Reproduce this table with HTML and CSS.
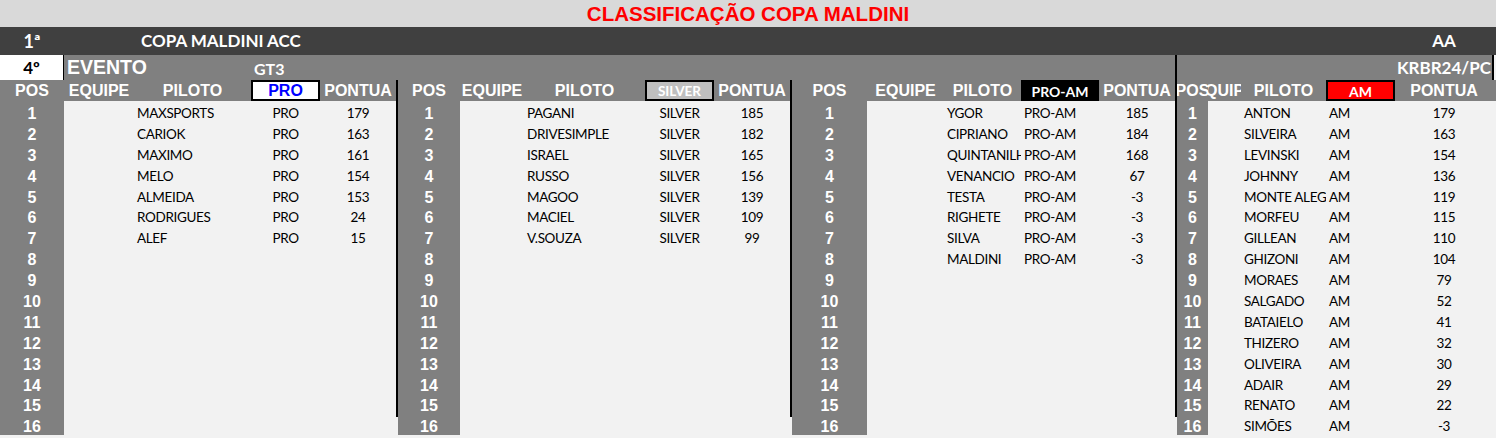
FILE: index.html
```html
<!DOCTYPE html>
<html lang="pt-BR">
<head>
<meta charset="utf-8">
<title>Classificação Copa Maldini</title>
<link rel="stylesheet" href="styles.css">
</head>
<body>
<div class="sheet">
  <div class="title">CLASSIFICAÇÃO COPA MALDINI</div>

  <div class="bar">
    <span class="bar-pos">1ª</span>
    <span></span>
    <span class="bar-name">COPA MALDINI ACC</span>
    <span class="bar-aa">AA</span>
    <span></span>
  </div>

  <div class="ev">
    <span class="ev-num">4º</span>
    <span class="ev-label">EVENTO</span>
    <span class="ev-class">GT3</span>
    <span class="ev-right">KRBR24/PC</span>
    <span class="ev-rest"></span>
  </div>

  <div class="panels">
    <section class="panel p1">
      <div class="hdr"><span>POS</span><span>EQUIPE</span><span>PILOTO</span><span class="box box-pro">PRO</span><span>PONTUA</span><span></span></div>
      <div class="body">
        <ol class="poscol"><li>1</li><li>2</li><li>3</li><li>4</li><li>5</li><li>6</li><li>7</li><li>8</li><li>9</li><li>10</li><li>11</li><li>12</li><li>13</li><li>14</li><li>15</li><li>16</li></ol>
        <div class="list">
          <div class="row"><span></span><span class="nm">MAXSPORTS</span><span class="cat">PRO</span><span class="pt">179</span></div>
          <div class="row"><span></span><span class="nm">CARIOK</span><span class="cat">PRO</span><span class="pt">163</span></div>
          <div class="row"><span></span><span class="nm">MAXIMO</span><span class="cat">PRO</span><span class="pt">161</span></div>
          <div class="row"><span></span><span class="nm">MELO</span><span class="cat">PRO</span><span class="pt">154</span></div>
          <div class="row"><span></span><span class="nm">ALMEIDA</span><span class="cat">PRO</span><span class="pt">153</span></div>
          <div class="row"><span></span><span class="nm">RODRIGUES</span><span class="cat">PRO</span><span class="pt">24</span></div>
          <div class="row"><span></span><span class="nm">ALEF</span><span class="cat">PRO</span><span class="pt">15</span></div>
        </div>
      </div>
    </section>

    <section class="panel p2">
      <div class="hdr"><span>POS</span><span>EQUIPE</span><span>PILOTO</span><span class="box box-silver">SILVER</span><span>PONTUA</span><span></span></div>
      <div class="body">
        <ol class="poscol"><li>1</li><li>2</li><li>3</li><li>4</li><li>5</li><li>6</li><li>7</li><li>8</li><li>9</li><li>10</li><li>11</li><li>12</li><li>13</li><li>14</li><li>15</li><li>16</li></ol>
        <div class="list">
          <div class="row"><span></span><span class="nm">PAGANI</span><span class="cat">SILVER</span><span class="pt">185</span></div>
          <div class="row"><span></span><span class="nm">DRIVESIMPLE</span><span class="cat">SILVER</span><span class="pt">182</span></div>
          <div class="row"><span></span><span class="nm">ISRAEL</span><span class="cat">SILVER</span><span class="pt">165</span></div>
          <div class="row"><span></span><span class="nm">RUSSO</span><span class="cat">SILVER</span><span class="pt">156</span></div>
          <div class="row"><span></span><span class="nm">MAGOO</span><span class="cat">SILVER</span><span class="pt">139</span></div>
          <div class="row"><span></span><span class="nm">MACIEL</span><span class="cat">SILVER</span><span class="pt">109</span></div>
          <div class="row"><span></span><span class="nm">V.SOUZA</span><span class="cat">SILVER</span><span class="pt">99</span></div>
        </div>
      </div>
    </section>

    <section class="panel p3">
      <div class="hdr"><span>POS</span><span>EQUIPE</span><span>PILOTO</span><span class="box box-proam">PRO-AM</span><span>PONTUA</span><span></span></div>
      <div class="body">
        <ol class="poscol"><li>1</li><li>2</li><li>3</li><li>4</li><li>5</li><li>6</li><li>7</li><li>8</li><li>9</li><li>10</li><li>11</li><li>12</li><li>13</li><li>14</li><li>15</li><li>16</li></ol>
        <div class="list">
          <div class="row"><span></span><span class="nm">YGOR</span><span class="cat">PRO-AM</span><span class="pt">185</span></div>
          <div class="row"><span></span><span class="nm">CIPRIANO</span><span class="cat">PRO-AM</span><span class="pt">184</span></div>
          <div class="row"><span></span><span class="nm">QUINTANILHA</span><span class="cat">PRO-AM</span><span class="pt">168</span></div>
          <div class="row"><span></span><span class="nm">VENANCIO</span><span class="cat">PRO-AM</span><span class="pt">67</span></div>
          <div class="row"><span></span><span class="nm">TESTA</span><span class="cat">PRO-AM</span><span class="pt">-3</span></div>
          <div class="row"><span></span><span class="nm">RIGHETE</span><span class="cat">PRO-AM</span><span class="pt">-3</span></div>
          <div class="row"><span></span><span class="nm">SILVA</span><span class="cat">PRO-AM</span><span class="pt">-3</span></div>
          <div class="row"><span></span><span class="nm">MALDINI</span><span class="cat">PRO-AM</span><span class="pt">-3</span></div>
        </div>
      </div>
    </section>

    <section class="panel p4">
      <div class="hdr"><span>POS</span><span>EQUIPE</span><span>PILOTO</span><span class="box box-am">AM</span><span>PONTUA</span><span></span></div>
      <div class="body">
        <ol class="poscol"><li>1</li><li>2</li><li>3</li><li>4</li><li>5</li><li>6</li><li>7</li><li>8</li><li>9</li><li>10</li><li>11</li><li>12</li><li>13</li><li>14</li><li>15</li><li>16</li></ol>
        <div class="list">
          <div class="row"><span></span><span class="nm">ANTON</span><span class="cat">AM</span><span class="pt">179</span></div>
          <div class="row"><span></span><span class="nm">SILVEIRA</span><span class="cat">AM</span><span class="pt">163</span></div>
          <div class="row"><span></span><span class="nm">LEVINSKI</span><span class="cat">AM</span><span class="pt">154</span></div>
          <div class="row"><span></span><span class="nm">JOHNNY</span><span class="cat">AM</span><span class="pt">136</span></div>
          <div class="row"><span></span><span class="nm">MONTE ALEGRE</span><span class="cat">AM</span><span class="pt">119</span></div>
          <div class="row"><span></span><span class="nm">MORFEU</span><span class="cat">AM</span><span class="pt">115</span></div>
          <div class="row"><span></span><span class="nm">GILLEAN</span><span class="cat">AM</span><span class="pt">110</span></div>
          <div class="row"><span></span><span class="nm">GHIZONI</span><span class="cat">AM</span><span class="pt">104</span></div>
          <div class="row"><span></span><span class="nm">MORAES</span><span class="cat">AM</span><span class="pt">79</span></div>
          <div class="row"><span></span><span class="nm">SALGADO</span><span class="cat">AM</span><span class="pt">52</span></div>
          <div class="row"><span></span><span class="nm">BATAIELO</span><span class="cat">AM</span><span class="pt">41</span></div>
          <div class="row"><span></span><span class="nm">THIZERO</span><span class="cat">AM</span><span class="pt">32</span></div>
          <div class="row"><span></span><span class="nm">OLIVEIRA</span><span class="cat">AM</span><span class="pt">30</span></div>
          <div class="row"><span></span><span class="nm">ADAIR</span><span class="cat">AM</span><span class="pt">29</span></div>
          <div class="row"><span></span><span class="nm">RENATO</span><span class="cat">AM</span><span class="pt">22</span></div>
          <div class="row"><span></span><span class="nm">SIMÕES</span><span class="cat">AM</span><span class="pt">-3</span></div>
        </div>
      </div>
    </section>
  </div>
</div>
</body>
</html>
```

FILE: styles.css
```css
* { box-sizing: border-box; }

html, body {
  margin: 0;
  padding: 0;
}

body {
  width: 1496px;
  height: 438px;
  overflow: hidden;
  background: #f2f2f2;
  font-family: Lato, "Liberation Sans", sans-serif;
  color: #000;
}

.sheet {
  display: flex;
  flex-direction: column;
  width: 1496px;
  height: 438px;
}

/* Row 1 : title */
.title {
  height: 27px;
  background: #d9d9d9;
  color: #ff0000;
  font: bold 20.5px "Liberation Sans", Arial, sans-serif;
  line-height: 27px;
  text-align: center;
  white-space: nowrap;
}

/* Row 2 : dark bar */
.bar {
  height: 28px;
  background: #404040;
  color: #fff;
  display: grid;
  grid-template-columns: 64px 77px 1fr 98px 3px;
  align-items: center;
  font-weight: 700;
  font-size: 17px;
  line-height: 28px;
  white-space: nowrap;
}

.bar-pos { text-align: center; font-size: 18px; }
.bar-aa { text-align: center; }

/* Row 3 : event */
.ev {
  height: 25px;
  background: #808080;
  display: flex;
  color: #fff;
  white-space: nowrap;
  line-height: 25px;
}

.ev-num {
  width: 64px;
  background: #fff;
  color: #000;
  border-right: 1px solid #000;
  text-align: center;
  font-weight: 700;
  font-size: 17px;
}

.ev-label {
  width: 187px;
  padding-left: 3px;
  font: bold 19.5px/25px "Liberation Sans", Arial, sans-serif;
}

.ev-class {
  width: 924px;
  padding-left: 3px;
  font-weight: 700;
  font-size: 16px;
  padding-top: 1px;
}

.ev-right {
  width: 319px;
  border-left: 2px solid #000;
  border-right: 2px solid #000;
  text-align: right;
  padding-right: 1px;
  font-weight: 700;
  font-size: 17px;
}

.ev-rest {
  flex: 1;
  background: #f2f2f2;
}

/* Panels */
.panels {
  display: flex;
  height: 337px;
}

.panel {
  display: flex;
  flex-direction: column;
  --tpl: var(--eq) var(--pil) var(--cat) var(--pts) 1fr;
}

.panel + .panel { border-left: 2px solid #000; }

.p1 { width: 396px; --pos: 64px; --eq: 70px; --pil: 117px; --cat: 69px; --pts: 76px; }
.p2 { width: 394px; --pos: 62px; --eq: 64px; --pil: 121px; --cat: 69px; --pts: 76px; }
.p3 { width: 385px; --pos: 75px; --eq: 77px; --pil: 77px; --cat: 78px; --pts: 76px; }
.p4 { width: 321px; --pos: 31px; --eq: 33px; --pil: 85px; --cat: 69px; --pts: 98px; }

.hdr {
  height: 21px;
  background: #808080;
  display: grid;
  grid-template-columns: var(--pos) var(--tpl);
  color: #fff;
  font: bold 16px/22.5px "Liberation Sans", Arial, sans-serif;
  white-space: nowrap;
}

.hdr > span {
  display: flex;
  justify-content: center;
  overflow: hidden;
}

.box {
  border: 2px solid #000;
  line-height: 18.5px;
}

.box-pro {
  background: #fff;
  color: #0000ff;
}

.box-silver {
  background: #bfbfbf;
  color: #fff;
  font: bold 13.5px/19px Lato, sans-serif;
}

.box-proam {
  background: #000;
  color: #fff;
  font: bold 14px/19px Lato, sans-serif;
}

.box-am {
  background: #ff0000;
  color: #fff;
  font: bold 14px/19px Lato, sans-serif;
}

.body {
  flex: 1;
  display: flex;
}

.poscol {
  list-style: none;
  margin: 0;
  padding: 0;
  width: var(--pos);
  flex: none;
  background: #808080;
  color: #fff;
  font: bold 16px/25px "Liberation Sans", Arial, sans-serif;
  text-align: center;
}

.poscol li {
  height: 20.9px;
  white-space: nowrap;
}

.list {
  flex: 1;
  background: #f2f2f2;
}

.row {
  display: grid;
  grid-template-columns: var(--tpl);
  height: 20.9px;
  font-size: 13.5px;
  letter-spacing: -0.35px;
  line-height: 25px;
  white-space: nowrap;
}

.nm {
  padding-left: 3px;
  overflow: hidden;
}

.cat, .pt { text-align: center; }

.p3 .cat,
.p4 .cat { text-align: left; padding-left: 3px; }
```
